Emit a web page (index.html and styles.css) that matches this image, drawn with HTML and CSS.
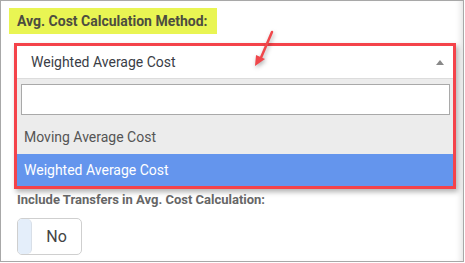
FILE: index.html
```html
<!DOCTYPE html>
<html lang="en">
<head>
    <meta charset="UTF-8">
    <meta name="viewport" content="width=device-width, initial-scale=1.0">
    <title>Avg. Cost Calculation Method</title>
    <link rel="stylesheet" href="styles.css">
</head>
<body>
    <div class="frame">
        <div class="field-label">
            <span class="highlight">Avg. Cost Calculation Method:</span>
        </div>

        <div class="combo">
            <div class="combo-head">
                <span>Weighted Average Cost</span>
                <span class="caret"></span>
            </div>
            <div class="combo-drop">
                <div class="search">
                    <input type="text">
                </div>
                <ul class="options">
                    <li>Moving Average Cost</li>
                    <li class="active">Weighted Average Cost</li>
                </ul>
            </div>
        </div>

        <div class="sub-label">Include Transfers in Avg. Cost Calculation:</div>

        <div class="toggle">
            <span class="knob"></span>
            <span class="toggle-text">No</span>
        </div>

        <!-- annotation arrow -->
        <svg class="pointer" width="30" height="44" viewBox="0 0 30 44">
            <line x1="20" y1="3" x2="8" y2="31" stroke="#f0474b" stroke-width="2.5" stroke-linecap="round"/>
            <polygon points="3,37 4,26 13,30" fill="#f0474b"/>
        </svg>
    </div>
</body>
</html>
```

FILE: styles.css
```css
* {
    box-sizing: border-box;
}

body {
    margin: 0;
    padding: 0;
    font-family: Roboto, "Liberation Sans", Arial, sans-serif;
    background: #fff;
}

.frame {
    position: relative;
    width: 464px;
    height: 262px;
    border: 1px solid #a8a8a8;
    padding: 7px 0 0 8px;
    box-shadow: inset -6px 0 6px -4px rgba(0, 0, 0, 0.12);
}

.field-label {
    display: flex;
}

.highlight {
    display: inline-block;
    height: 26px;
    line-height: 27px;
    padding: 0 9px 0 8px;
    background: #e9f553;
    color: #4d4d40;
    font-size: 14px;
    font-weight: bold;
}

.combo {
    margin: 9px 0 0 5px;
    width: 442px;
    border: 3px solid #f4434a;
    box-shadow: 2px 3px 5px rgba(0, 0, 0, 0.3);
}

.combo-head {
    display: flex;
    align-items: center;
    justify-content: space-between;
    height: 33px;
    padding: 0 9px 0 14px;
    background: #fff;
    border-bottom: 1px solid #dcdcdc;
    color: #3a3d46;
    font-size: 14px;
}

.caret {
    width: 0;
    height: 0;
    border-left: 4px solid transparent;
    border-right: 4px solid transparent;
    border-bottom: 5px solid #888;
}

.combo-drop {
    background: #ececec;
}

.search {
    padding: 5px 3px 0 4px;
}

.search input {
    display: block;
    width: 100%;
    height: 31px;
    border: 1px solid #a9a9a9;
    background: #fff;
    margin: 0;
}

.options {
    list-style: none;
    margin: 0;
    padding: 5px 0 0;
}

.options li {
    height: 34px;
    line-height: 34px;
    padding-left: 7px;
    color: #555;
    font-size: 14px;
}

.options li.active {
    height: 32px;
    line-height: 32px;
    background: #6495ed;
    color: #fff;
}

.sub-label {
    margin: 3px 0 0 8px;
    color: #666;
    font-size: 13px;
    font-weight: bold;
}

.toggle {
    display: flex;
    align-items: stretch;
    width: 65px;
    height: 37px;
    margin: 11px 0 0 8px;
    border: 1px solid #cfcfcf;
    border-radius: 5px;
    overflow: hidden;
}

.knob {
    width: 14px;
    background: #e4eefa;
    border-right: 1px solid #d8dfe8;
    border-radius: 0 5px 5px 0;
}

.toggle-text {
    flex: 1;
    display: flex;
    align-items: center;
    justify-content: center;
    color: #444;
    font-size: 16px;
}

.pointer {
    position: absolute;
    left: 251px;
    top: 28px;
    filter: drop-shadow(1px 2px 2px rgba(0, 0, 0, 0.3));
}
```
